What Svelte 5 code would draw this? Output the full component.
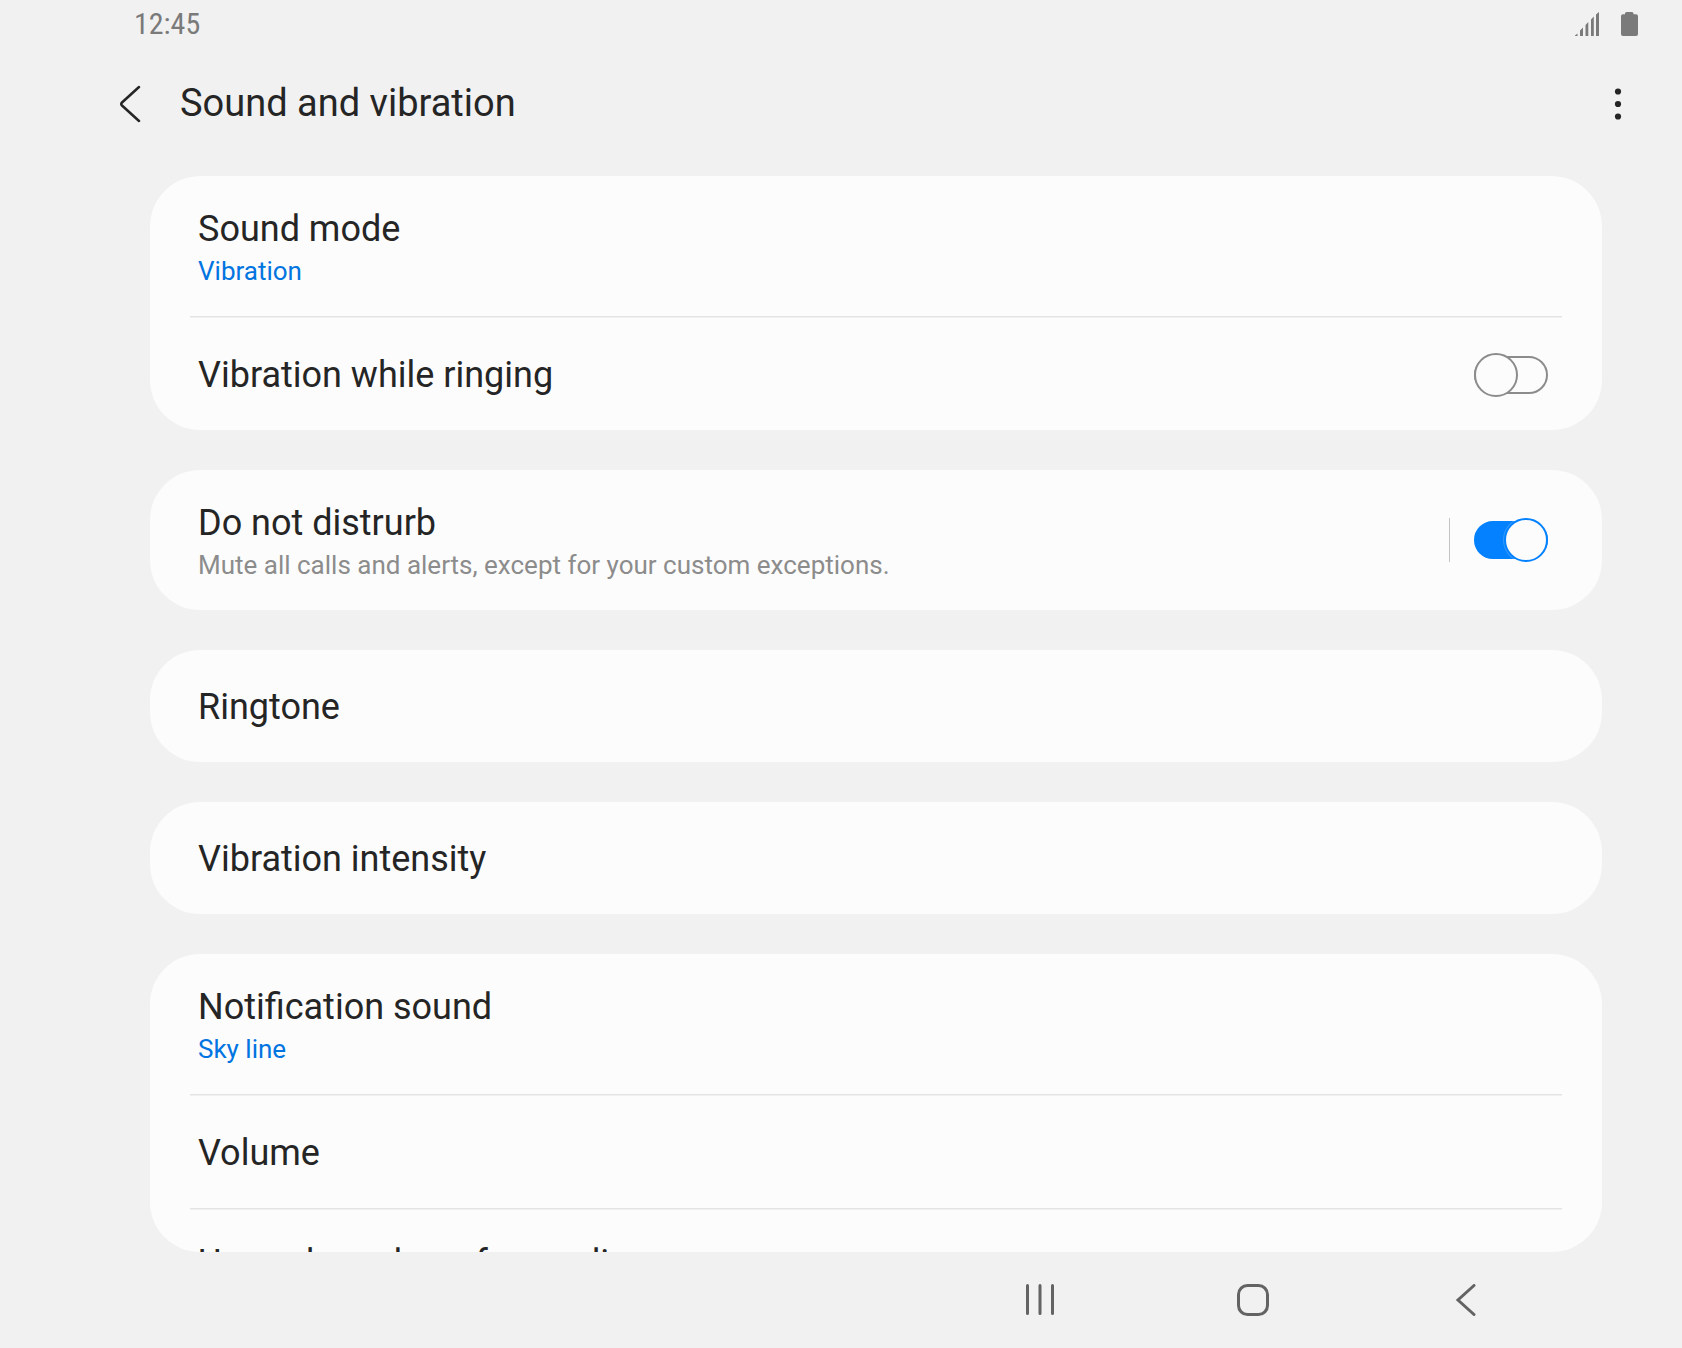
<script>
  let ringVibration = $state(false);
  let doNotDisturb = $state(true);
</script>

{#snippet link(title, detail)}
  <button class="row" class:tall={detail !== undefined} type="button">
    <span class="title">{title}</span>
    {#if detail}<span class="detail accent">{detail}</span>{/if}
  </button>
{/snippet}

<div class="screen">
  <div class="status">
    <time>12:45</time>
    <div class="indicators">
      <svg width="24" height="24" viewBox="0 0 24 24" role="img" aria-label="Signal strength">
        <path d="M0 24V23.5L2.5 21.5V24ZM5 24V18.5L8 15.5V24ZM10.500 24V13L13.300 10V24ZM16 24V7.500L18.800 4.500V24ZM21 24V2.500L24 0V24Z" />
      </svg>
      <svg width="17" height="24" viewBox="0 0 17 24" role="img" aria-label="Battery">
        <path d="M4 2.200V1.500Q4 0 5.500 0H11Q12.500 0 12.500 1.500V2.200H15Q17 2.200 17 4.200V22Q17 24 15 24H2Q0 24 0 22V4.200Q0 2.200 2 2.200Z" />
      </svg>
    </div>
  </div>

  <header>
    <button class="icon" type="button" aria-label="Navigate up">
      <svg width="22" height="38" viewBox="0 0 22 38">
        <path d="M20 2L3 17.500Q1.500 19 3 20.500L20 36" fill="none" stroke="#252525" stroke-width="2.500" stroke-linecap="round" />
      </svg>
    </button>
    <h1>Sound and vibration</h1>
    <button class="icon" type="button" aria-label="More options">
      <svg width="8" height="32" viewBox="0 0 8 32" fill="#252525">
        <circle cx="4" cy="3.500" r="3.100" /><circle cx="4" cy="16" r="3.100" /><circle cx="4" cy="28.500" r="3.100" />
      </svg>
    </button>
  </header>

  <main>
    <section>
      {@render link('Sound mode', 'Vibration')}
      <hr />
      <label class="row switch-row">
        <span class="title">Vibration while ringing</span>
        <input type="checkbox" role="switch" bind:checked={ringVibration} />
      </label>
    </section>

    <section class="split">
      <button class="row tall" type="button">
        <span class="title" id="dnd">Do not distrurb</span>
        <span class="detail">Mute all calls and alerts, except for your custom exceptions.</span>
      </button>
      <div class="control">
        <input type="checkbox" role="switch" aria-labelledby="dnd" bind:checked={doNotDisturb} />
      </div>
    </section>

    <section>{@render link('Ringtone')}</section>
    <section>{@render link('Vibration intensity')}</section>

    <section>
      {@render link('Notification sound', 'Sky line')}
      <hr />
      {@render link('Volume')}
      <hr />
      {@render link('Use volume keys for media', '')}
    </section>
  </main>

  <nav aria-label="System">
    <button type="button" aria-label="Recent apps">
      <svg width="32" height="32" viewBox="0 0 32 32">
        <path d="M3.500 1.500V29.500M16 1.500V29.500M28.500 1.500V29.500" />
      </svg>
    </button>
    <button type="button" aria-label="Home">
      <svg width="32" height="32" viewBox="0 0 32 32">
        <rect x="1.500" y="1.500" width="29" height="29" rx="9" />
      </svg>
    </button>
    <button type="button" aria-label="Back">
      <svg width="32" height="32" viewBox="0 0 32 32">
        <path d="M24 1.500L8 16L24 30.500" />
      </svg>
    </button>
  </nav>
</div>

<style>
  :global(body) {
    background: #f1f1f1;
  }

  .screen {
    display: flex;
    flex-direction: column;
    height: 100vh;
    box-sizing: border-box;
    color: #252525;
    font-family: Roboto, 'Liberation Sans', sans-serif;
  }

  button {
    border: 0;
    padding: 0;
    background: none;
    color: inherit;
    font: inherit;
    text-align: left;
    cursor: pointer;
  }

  svg {
    display: block;
  }

  .status {
    display: flex;
    flex: none;
    align-items: center;
    justify-content: space-between;
    height: 48px;
    padding: 0 44px 0 134px;
    color: #7a7a7a;
  }

  .status time {
    font-family: 'Roboto Condensed', Roboto, sans-serif;
    font-size: 30px;
    line-height: 48px;
  }

  .indicators {
    display: flex;
    gap: 22px;
    fill: #7a7a7a;
  }

  header {
    display: flex;
    flex: none;
    align-items: center;
    height: 112px;
    margin-bottom: 16px;
    padding: 0 40px 0 106px;
  }

  .icon {
    display: flex;
    align-items: center;
    justify-content: center;
    width: 48px;
    height: 56px;
  }

  h1 {
    flex: 1;
    margin: 0;
    padding: 0 0 2px 26px;
    font-size: 38px;
    font-weight: 400;
    line-height: 48px;
  }

  main {
    display: flex;
    flex: 1;
    flex-direction: column;
    gap: 40px;
    min-height: 0;
    margin: 0 80px 0 150px;
    border-radius: 50px;
    overflow-y: auto;
    scrollbar-width: none;
  }

  section {
    flex: none;
    border-radius: 50px;
    background: #fcfcfc;
  }

  .row {
    display: flex;
    flex-direction: column;
    box-sizing: border-box;
    width: 100%;
    min-height: 112px;
    padding: 33px 48px 31px;
  }

  .tall {
    min-height: 140px;
    padding: 29px 48px 27px;
  }

  .switch-row {
    flex-direction: row;
    align-items: center;
    justify-content: space-between;
    padding-right: 54px;
    cursor: pointer;
  }

  .title {
    font-size: 36px;
    line-height: 48px;
  }

  .detail {
    color: #8c8c8c;
    font-size: 26px;
    line-height: 36px;
  }

  .accent {
    color: #0074e0;
  }

  hr {
    height: 2px;
    margin: 0 40px;
    border: 0;
    background: linear-gradient(#e3e3e3 50%, #f0f0f0 50%);
  }

  .split {
    display: flex;
    align-items: center;
  }

  .control {
    padding: 0 54px 0 24px;
    border-left: 1px solid #c4c4c4;
  }

  input {
    display: grid;
    flex: none;
    align-items: center;
    width: 74px;
    height: 44px;
    margin: 0;
    appearance: none;
    cursor: pointer;
  }

  input::before,
  input::after {
    grid-area: 1 / 1;
    box-sizing: border-box;
    border: 2px solid #8c8c8c;
    content: '';
  }

  input::before {
    height: 38px;
    border-radius: 19px;
  }

  input::after {
    width: 44px;
    height: 44px;
    border-radius: 50%;
    background: #fcfcfc;
  }

  input:checked::before {
    border-color: #0381fe;
    background: #0381fe;
  }

  input:checked::after {
    justify-self: end;
    border-color: #0381fe;
    box-shadow: 0 0 0 1px #fcfcfc33;
  }

  nav {
    display: flex;
    flex: none;
    justify-content: flex-end;
    height: 96px;
    padding-right: 110px;
  }

  nav button {
    display: flex;
    align-items: center;
    justify-content: center;
    width: 213px;
  }

  nav svg {
    fill: none;
    stroke: #636363;
    stroke-width: 3;
    stroke-linecap: round;
  }
</style>
